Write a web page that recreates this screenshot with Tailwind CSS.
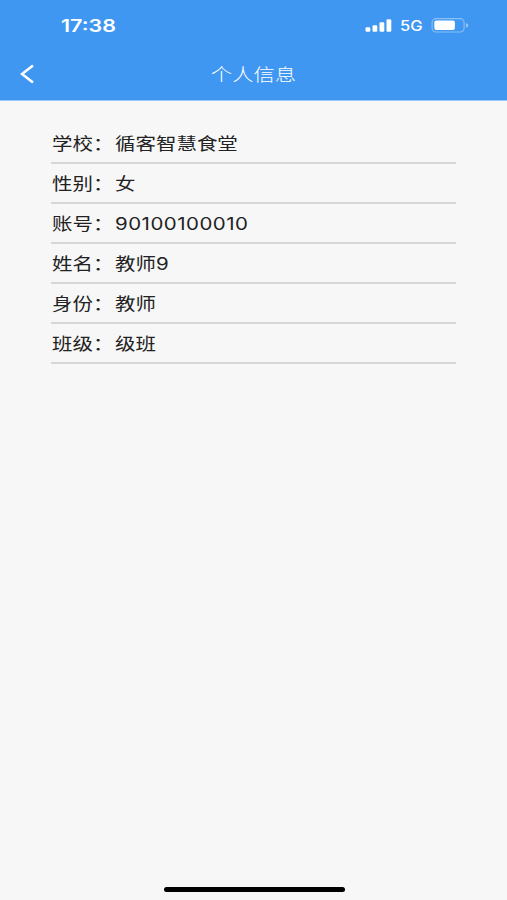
<!DOCTYPE html>
<html lang="zh-CN">
<head>
  <meta charset="UTF-8">
  <meta name="viewport" content="width=device-width, initial-scale=1.0">
  <title>个人信息</title>
  <script src="https://cdn.jsdelivr.net/npm/@tailwindcss/browser@4"></script>
</head>
<body class="bg-[#f7f7f7]">
  <div class="h-screen flex flex-col overflow-hidden font-['Inter','Noto_Sans_CJK_SC',sans-serif] text-[#222]">
    <header class="h-[101px] shrink-0 bg-[#3f97f1] border-b border-[#9cc8f5] text-white">
      <!-- 状态栏 -->
      <div class="h-[50px] pt-[2px] pl-[61px] pr-[38px] flex items-center justify-between">
        <span class="block text-[17px] leading-5 font-semibold origin-left scale-x-[1.26]">17:38</span>
        <div class="flex items-center">
          <svg class="w-[27px] h-[14px]" viewBox="0 0 27 14" fill="currentColor">
            <rect x="0.5" y="8.2" width="4.8" height="4.6" rx="1.2" />
            <rect x="7.5" y="6.2" width="4.8" height="6.6" rx="1.2" />
            <rect x="14.5" y="3.2" width="4.8" height="9.6" rx="1.2" />
            <rect x="21.5" y="0.2" width="4.8" height="12.6" rx="1.2" />
          </svg>
          <span class="block w-[39px] pl-[8px]"><span class="block text-[14px] leading-5 font-medium origin-left scale-x-[1.18]">5G</span></span>
          <svg class="w-[38px] h-[16px]" viewBox="0 0 38 16" fill="none">
            <rect x="1.1" y="0.6" width="32" height="13.4" rx="4" stroke="#fff" stroke-opacity="0.4" stroke-width="1.1" />
            <rect x="3.3" y="2.5" width="20.6" height="9.6" rx="2" fill="#fff" />
            <path d="M35 5c3 .8 3 3.8 0 4.6z" fill="#fff" fill-opacity="0.45" />
          </svg>
        </div>
      </div>
      <!-- 导航栏 -->
      <div class="h-[50px] pb-[2px] grid grid-cols-[60px_1fr_60px] items-center">
        <svg class="ml-[20px] w-[14px] h-[20px]" viewBox="0 0 14 20" fill="none" stroke="currentColor" stroke-width="2.6">
          <path d="M13 1.5 2 10l11 8.5" />
        </svg>
        <h1 class="pt-px text-center text-[17.5px] leading-6 font-light scale-x-[1.22]">个人信息</h1>
      </div>
    </header>

    <main class="pt-[23px] px-[51px] text-[16.8px]">
      <div class="h-10 pt-[4px] flex items-center border-b-2 border-[#d6d6d6]">
        <span class="w-[63.5px] pl-px"><span class="block w-[51px] origin-left scale-x-[1.22] whitespace-nowrap">学校：</span></span>
        <span class="origin-left scale-x-[1.22]">循客智慧食堂</span>
      </div>
      <div class="h-10 pt-[4px] flex items-center border-b-2 border-[#d6d6d6]">
        <span class="w-[63.5px] pl-px"><span class="block w-[51px] origin-left scale-x-[1.22] whitespace-nowrap">性别：</span></span>
        <span class="origin-left scale-x-[1.22]">女</span>
      </div>
      <div class="h-10 pt-[4px] flex items-center border-b-2 border-[#d6d6d6]">
        <span class="w-[63.5px] pl-px"><span class="block w-[51px] origin-left scale-x-[1.22] whitespace-nowrap">账号：</span></span>
        <span class="origin-left scale-x-[1.22] tracking-[0.4px]">90100100010</span>
      </div>
      <div class="h-10 pt-[4px] flex items-center border-b-2 border-[#d6d6d6]">
        <span class="w-[63.5px] pl-px"><span class="block w-[51px] origin-left scale-x-[1.22] whitespace-nowrap">姓名：</span></span>
        <span class="origin-left scale-x-[1.22]">教师9</span>
      </div>
      <div class="h-10 pt-[4px] flex items-center border-b-2 border-[#d6d6d6]">
        <span class="w-[63.5px] pl-px"><span class="block w-[51px] origin-left scale-x-[1.22] whitespace-nowrap">身份：</span></span>
        <span class="origin-left scale-x-[1.22]">教师</span>
      </div>
      <div class="h-10 pt-[4px] flex items-center border-b-2 border-[#d6d6d6]">
        <span class="w-[63.5px] pl-px"><span class="block w-[51px] origin-left scale-x-[1.22] whitespace-nowrap">班级：</span></span>
        <span class="origin-left scale-x-[1.22]">级班</span>
      </div>
    </main>

    <!-- 底部横条 -->
    <div class="mt-auto mb-[8px] ml-[164px] w-[181px] h-[5px] shrink-0 rounded-full bg-black"></div>
  </div>
</body>
</html>
